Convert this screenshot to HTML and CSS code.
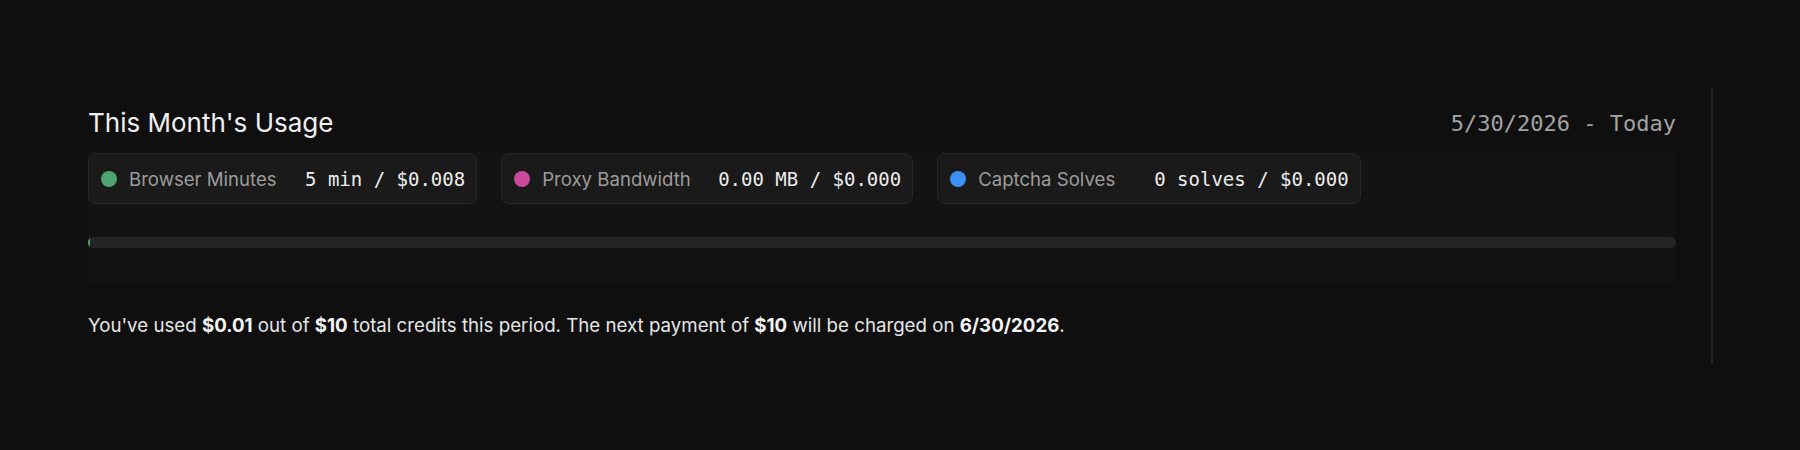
FILE: index.html
```html
<!DOCTYPE html>
<html lang="en">
<head>
<meta charset="utf-8">
<title>Usage</title>
<link rel="stylesheet" href="styles.css">
</head>
<body>
<div class="page">
  <div class="wrap">
    <section class="usage">
      <header class="usage-head">
        <h2 class="usage-title">This Month's Usage</h2>
        <span class="usage-range">5/30/2026 - Today</span>
      </header>
      <div class="panel">
        <div class="chips">
          <div class="chip">
            <span class="dot dot-green"></span>
            <span class="chip-label">Browser Minutes</span>
            <span class="chip-value">5 min / $0.008</span>
          </div>
          <div class="chip">
            <span class="dot dot-pink"></span>
            <span class="chip-label">Proxy Bandwidth</span>
            <span class="chip-value">0.00 MB / $0.000</span>
          </div>
          <div class="chip">
            <span class="dot dot-blue"></span>
            <span class="chip-label">Captcha Solves</span>
            <span class="chip-value">0 solves / $0.000</span>
          </div>
        </div>
        <div class="track"><div class="fill" style="width:0.1%"></div></div>
      </div>
      <p class="summary">You've used <b>$0.01</b> out of <b>$10</b> total credits this period. The next payment of <b>$10</b> will be charged on <b>6/30/2026</b>.</p>
    </section>
  </div>
</div>
</body>
</html>
```

FILE: styles.css
```css
html, body {
  margin: 0;
  padding: 0;
  background: #0f0f0f;
}
body {
  font-family: Inter, "Noto Sans", sans-serif;
  color: #ededed;
}
.page {
  padding: 87px 0 0 88px;
  display: flex;
}
.wrap {
  width: 1588px;
  height: 276px;
  padding-right: 35px;
  border-right: 2px solid #222222;
}
.usage-head {
  display: flex;
  justify-content: space-between;
  align-items: baseline;
  padding-top: 20px;
  height: 45px;
}
.usage-title {
  margin: 0;
  font-size: 26px;
  font-weight: 400;
  line-height: 32px;
  color: #f0f0f0;
}
.usage-range {
  font-family: "DejaVu Sans Mono", "Liberation Mono", monospace;
  font-size: 22px;
  color: #a3a3a3;
  position: relative;
  top: -1px;
}
.panel {
  background: #131313;
  height: 130px;
  display: flex;
  flex-direction: column;
}
.chips {
  display: flex;
  gap: 24px;
  padding-top: 1px;
}
.chip {
  display: flex;
  align-items: center;
  height: 49px;
  padding: 0 11px 0 12px;
  background: #1a1a1a;
  border: 1px solid #272727;
  border-radius: 8px;
}
.dot {
  width: 16px;
  height: 16px;
  border-radius: 50%;
  margin-right: 12px;
  flex: none;
}
.dot-green { background: #4fa56f; }
.dot-pink { background: #c94a9c; }
.dot-blue { background: #3d8ef5; }
.chip-label {
  min-width: 150px;
  font-size: 18.6px;
  color: #9c9c9c;
  margin-right: 26px;
}
.chip-value {
  font-family: "DejaVu Sans Mono", "Liberation Mono", monospace;
  font-size: 19px;
  color: #ededed;
}
.track {
  margin-top: 33px;
  height: 11px;
  border-radius: 6px;
  background: #242424;
  overflow: hidden;
}
.fill {
  height: 100%;
  min-width: 2px;
  background: #4fa56f;
}
.summary {
  margin: 32px 0 0;
  font-size: 18.7px;
  line-height: 24px;
  color: #e6e6e6;
}
.summary b {
  font-weight: 700;
  color: #f5f5f5;
}
```
